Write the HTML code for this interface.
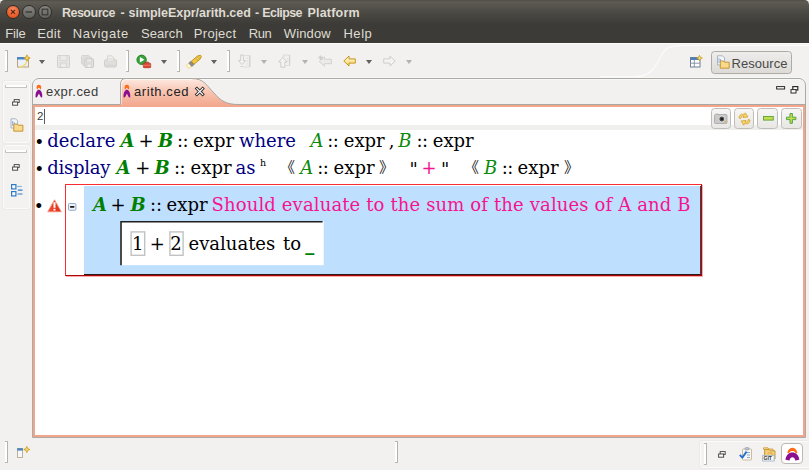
<!DOCTYPE html>
<html><head><meta charset="utf-8"><title>Resource - simpleExpr/arith.ced - Eclipse Platform</title>
<style>
html,body{margin:0;padding:0;}
body{width:809px;height:470px;overflow:hidden;background:#f2f1f0;position:relative;font-family:"Liberation Sans",sans-serif;}
.abs{position:absolute;}
#title{left:0;top:0;width:809px;height:24px;background:linear-gradient(#504e47 0,#5d5b52 2px,#4c4a44 50%,#3c3b37 100%);border-radius:4.500px 4.500px 0 0;}
#menubar{left:0;top:24px;width:809px;height:19px;background:#3c3b37;border-bottom:1px solid #fbfbfa;}
.t{position:absolute;white-space:nowrap;transform-origin:0 0;line-height:1;}
.tt{top:7px;font-weight:bold;font-size:12.5px;color:#dfdbd2;}
.m{top:26.5px;font-size:13px;color:#dfdbd2;}
/* tab folder */
#folder{left:32px;top:78px;width:772px;height:358px;border:1px solid #acaaa5;box-shadow:0 -1px 0 #f7f7f6, inset 0 1px 0 #f8f8f7;border-radius:7px 7px 0 0;background:#f2f1f0;}
#oband{left:33px;top:105px;width:772px;height:2px;background:#f2a58a;}
#oframe{left:33px;top:105px;width:768px;height:328px;border:2px solid #f2a58a;background:#fff;}
#gline{left:33px;top:104px;width:772px;height:1px;background:#a9a7a2;}
#gband{left:35px;top:125px;width:768px;height:5px;background:#efefee;}
.ln{position:absolute;white-space:nowrap;font-family:"DejaVu Serif",serif;font-size:18px;line-height:26px;height:26px;color:#000;}
.ln span{position:absolute;top:0;}
.kw{color:#000080;}
.ln span.bu{font-size:17px;top:.5px;}
.cc{letter-spacing:-.6px;}
.ex{letter-spacing:0;margin-left:.6px}
.bk{font-size:15px;font-family:"Liberation Sans","Noto Sans CJK SC","WenQuanYi Zen Hei",sans-serif;color:#222;}
.gb{color:#008000;font-weight:bold;font-style:italic;}
.gi{color:#0c8a0c;font-style:italic;}
.pk{color:#f5148e;}

.sep{position:absolute;width:2px;background:#fff;border-right:1px solid #b4b2ad;}
.sep:before,.sep:after{content:"";position:absolute;left:0;width:3px;height:1px;background:#b9b7b2;}
.sep:before{top:-1px}.sep:after{bottom:-1px}
.dd{position:absolute;width:0;height:0;border-left:3.5px solid transparent;border-right:3.5px solid transparent;border-top:4.5px solid #62615e;}
.dd.l{border-top-color:#b4b2ae;}
svg{position:absolute;overflow:visible;}
.panel{position:absolute;border:1px solid #fbfbfa;border-radius:2.500px;background:#f3f2f1;box-shadow:0 0 0 1px #eceae8;}
.hnd{position:absolute;height:2px;background:#fff;border:1px solid #c6c4c0;border-top:none;border-radius:0 0 1px 1px}

.wb{position:absolute;top:5.100px;width:12px;height:12px;border-radius:50%;border:.8px solid #2e2d2a;box-sizing:content-box;}
.tab{position:absolute;font-size:13px;color:#3a3a38;white-space:nowrap;line-height:1;}
.btn{position:absolute;box-sizing:border-box;border:1px solid #c0bdb8;border-radius:3.5px;background:linear-gradient(#f7f6f5,#e9e7e4);}
</style></head><body>
<div id="title" class="abs"></div>
<div id="menubar" class="abs"></div>

<!-- window buttons -->
<div class="wb" style="left:6.3px;background:radial-gradient(circle at 50% 30%,#f58a62,#e9541f 75%);"></div>
<div class="wb" style="left:22.3px;background:linear-gradient(#85847f,#64635f);"></div>
<div class="wb" style="left:38.4px;background:linear-gradient(#85847f,#64635f);"></div>
<svg style="left:0;top:0" width="60" height="24" viewBox="0 0 60 24">
 <path d="M11 9.900 L15 13.900 M15 9.900 L11 13.900" stroke="#5a2410" stroke-width="1.300"/>
 <path d="M25.6 12 H32" stroke="#3a3936" stroke-width="1.4"/>
 <rect x="42.2" y="9.2" width="5.6" height="5.6" fill="none" stroke="#3a3936" stroke-width="1.2"/>
</svg>
<span class="t tt" style="left:61.9px;letter-spacing:-.49px">Resource</span>
<span class="t tt" style="left:120.5px">-</span>
<span class="t tt" style="left:128.6px;letter-spacing:-.04px">simpleExpr/arith.ced</span>
<span class="t tt" style="left:254.9px">-</span>
<span class="t tt" style="left:262.3px;letter-spacing:-.59px">Eclipse</span>
<span class="t tt" style="left:307.5px;letter-spacing:.2px">Platform</span>
<span class="t m" style="left:5.2px;letter-spacing:-.14px">File</span>
<span class="t m" style="left:37.3px;letter-spacing:.3px">Edit</span>
<span class="t m" style="left:72.7px;letter-spacing:.6px">Navigate</span>
<span class="t m" style="left:140.9px;letter-spacing:.11px">Search</span>
<span class="t m" style="left:193.8px;letter-spacing:.29px">Project</span>
<span class="t m" style="left:248.7px;letter-spacing:-.41px">Run</span>
<span class="t m" style="left:283.8px;letter-spacing:.13px">Window</span>
<span class="t m" style="left:343.4px;letter-spacing:.56px">Help</span>

<!-- toolbar -->
<div class="sep" style="left:5px;top:51px;height:20px"></div>
<div class="sep" style="left:126px;top:51px;height:20px"></div>
<div class="sep" style="left:176.5px;top:51px;height:20px"></div>
<div class="sep" style="left:227px;top:51px;height:20px"></div>
<div class="dd" style="left:39px;top:60px"></div>
<div class="dd" style="left:160.5px;top:60px"></div>
<div class="dd" style="left:211px;top:60px"></div>
<div class="dd l" style="left:261px;top:60px"></div>
<div class="dd l" style="left:301.5px;top:60px"></div>
<div class="dd" style="left:365.5px;top:60px"></div>
<div class="dd l" style="left:405.5px;top:60px"></div>
<!-- new -->
<svg style="left:16px;top:54px" width="16" height="16" viewBox="0 0 16 16">
 <rect x="1.5" y="3.5" width="11" height="9.5" fill="#e9f1fb" stroke="#b9a27a"/>
 <rect x="1" y="3" width="9" height="2.5" fill="#4a86c5"/>
 <path d="M11 5 C11 10 8 12.5 3.5 13" fill="none" stroke="#f5d76b" stroke-width="1.3"/>
 <path d="M11 .8 L12 3 L14.2 4 L12 5 L11 7.2 L10 5 L7.8 4 L10 3Z" fill="#f3d06a" stroke="#c99a1c" stroke-width=".8"/>
</svg>
<!-- save (disabled) -->
<svg style="left:57px;top:55px" width="13" height="13" viewBox="0 0 13 13">
 <rect x=".5" y=".5" width="12" height="12" rx="1" fill="#e7e5e3" stroke="#d3d1ce"/>
 <rect x="3" y=".5" width="7" height="5" fill="#ebeae8" stroke="#d4d2cf" stroke-width=".7"/>
 <rect x="3.5" y="8" width="6" height="4.5" fill="#ecebe9" stroke="#cfcdca" stroke-width=".7"/>
</svg>
<!-- save all (disabled) -->
<svg style="left:80.5px;top:55px" width="13" height="13" viewBox="0 0 13 13">
 <rect x=".5" y=".5" width="8" height="8.5" rx="1" fill="#e6e5e3" stroke="#d6d4d1"/>
 <rect x="2" y="2" width="8.5" height="8.5" rx="1" fill="#e6e5e3" stroke="#d6d4d1"/>
 <rect x="3.8" y="3.8" width="8.7" height="8.7" rx="1" fill="#e3e1df" stroke="#cbc9c6"/>
 <rect x="5.5" y="4" width="5.2" height="3" fill="#ecebe9" stroke="#d0cecb" stroke-width=".7"/>
 <rect x="6" y="9" width="4.2" height="3.4" fill="#eeedeb" stroke="#cfcdca" stroke-width=".7"/>
</svg>
<!-- print (disabled) -->
<svg style="left:104px;top:55px" width="13" height="13" viewBox="0 0 13 13">
 <path d="M3.5 5.5 V.8 H8 L9.8 2.6 V5.5Z" fill="#efeeec" stroke="#d3d1ce" stroke-width=".8"/>
 <rect x=".5" y="4.8" width="12" height="7.2" rx="1.5" fill="#e1dfdd" stroke="#d0cecb"/>
 <rect x="3" y="4" width="7" height="2.6" fill="#eae9e7" stroke="#d3d1ce" stroke-width=".6"/>
 <rect x="1.2" y="9.6" width="10.6" height="2" fill="#d9d7d4"/>
</svg>
<!-- run ext tools -->
<svg style="left:136px;top:54px" width="16" height="15" viewBox="0 0 16 15">
 <circle cx="5.600" cy="5.800" r="4.700" fill="#3aa23a" stroke="#1f7a22" stroke-width=".9"/>
 <path d="M3.900 3 L8.400 5.800 L3.900 8.600Z" fill="#fff"/>
 <path d="M9.200 9.200 V8.300 H12.600 V9.200" fill="none" stroke="#b5301f" stroke-width="1"/>
 <rect x="7.300" y="9.200" width="7.400" height="4.500" rx=".8" fill="#d9432f" stroke="#b5301f" stroke-width=".7"/>
 <rect x="7.300" y="10.800" width="7.400" height=".8" fill="#f08a7a"/>
</svg>
<!-- flashlight / search -->
<svg style="left:186px;top:54px" width="16" height="15" viewBox="0 0 16 15">
 <g transform="rotate(-40 8 7.500)">
  <rect x="-.5" y="5.500" width="4" height="4.200" rx="1.200" fill="#fffbe0" stroke="#f3cf5e" stroke-width=".8"/>
  <rect x="3" y="5.200" width="3.200" height="4.800" rx=".8" fill="#8d8d8d" stroke="#777" stroke-width=".6"/>
  <path d="M6.200 5.600 H14.500 L17 7 V8.200 L14.500 9.600 H6.200Z" fill="#f5c842" stroke="#b98a14" stroke-width=".8"/>
  <rect x="11.400" y="6.900" width="3" height="1.400" rx=".5" fill="#fff3b0" stroke="#a77b10" stroke-width=".5"/>
 </g>
</svg>
<!-- next annotation (disabled) -->
<svg style="left:238px;top:54px" width="13" height="14" viewBox="0 0 13 14">
 <path d="M6.500 1.500 H11.800 V13 H6" fill="#f1f0ee" stroke="#dad8d5" stroke-width=".8"/>
 <path d="M11.800 1.500 V13" stroke="#cfcdca" stroke-width=".9"/>
 <path d="M2.600 1 H5.400 V6.500 H7.400 L4 10.600 L.6 6.500 H2.600Z" fill="#f4f3f1" stroke="#c9c7c4" stroke-width=".8"/>
 <path d="M2 12.500 H6 M8.500 4 H10.500 M8.500 7 H10.500 M8.500 10 H10.500" stroke="#d6d4d1" stroke-width=".8"/>
</svg>
<!-- prev annotation (disabled) -->
<svg style="left:278px;top:54px" width="13" height="14" viewBox="0 0 13 14">
 <path d="M5 1 H11.600 V11.500 H8" fill="#f1f0ee" stroke="#dad8d5" stroke-width=".8"/>
 <path d="M11.600 1 V11.500" stroke="#cfcdca" stroke-width=".9"/>
 <path d="M2.800 13.200 H6.800 V8 H9 L4.800 3.400 L.6 8 H2.800Z" fill="#f5f4f2" stroke="#c6c4c1" stroke-width=".8"/>
 <path d="M4.500 2.200 H7 M9 4.500 H10.500 M9 7 H10.500" stroke="#d6d4d1" stroke-width=".8"/>
</svg>
<!-- last edit (disabled) -->
<svg style="left:318px;top:55px" width="15" height="12" viewBox="0 0 15 12">
 <path d="M1.2 6.5 L6.4 1.8 V4.3 H13.4 V8.7 H6.4 V11.2Z" fill="#ecebe9" stroke="#d0cecb" stroke-width=".9"/>
 <path d="M2.6 .4 V5 M.3 2.7 H4.9 M1 1.1 L4.2 4.3 M4.2 1.1 L1 4.3" stroke="#c6c4c1" stroke-width=".7"/>
</svg>
<!-- back -->
<svg style="left:342.5px;top:55px" width="13" height="12" viewBox="0 0 13 12">
 <defs><linearGradient id="gy" x1="0" y1="0" x2="0" y2="1"><stop offset="0" stop-color="#fffbe6"/><stop offset=".5" stop-color="#fde9a0"/><stop offset="1" stop-color="#f6cd5c"/></linearGradient></defs>
 <path d="M.8 6 L6 1 V3.9 H12.3 V8.1 H6 V11Z" fill="url(#gy)" stroke="#c8951e" stroke-width="1" stroke-linejoin="round"/>
</svg>
<!-- forward (disabled) -->
<svg style="left:383px;top:55px" width="13" height="12" viewBox="0 0 13 12">
 <path d="M12.2 6 L7 1 V3.9 H.7 V8.1 H7 V11Z" fill="#f4f3f2" stroke="#d0cecb" stroke-width="1" stroke-linejoin="round"/>
</svg>

<div id="folder" class="abs"></div>
<div id="oframe" class="abs"></div>
<div id="gline" class="abs"></div>
<div id="gband" class="abs"></div>


<!-- perspective switcher -->
<svg style="left:600px;top:44px" width="209" height="36" viewBox="0 0 209 36">
 <path d="M0 32.500 H34 C50 32.500 54 25 60 14 C65 4.500 68 1.700 80 1.700 H209" fill="none" stroke="#fbfbfa" stroke-width="1.200"/>
</svg>
<svg style="left:690px;top:55px" width="13" height="13" viewBox="0 0 13 13">
 <rect x=".5" y="2.5" width="9.5" height="9.5" fill="#fff" stroke="#6d7f96" stroke-width="1"/>
 <rect x=".5" y="2.5" width="9.5" height="2.5" fill="#4f7fb8"/>
 <path d="M.5 8.2 H10 M4.3 5 V12" stroke="#7d8da3" stroke-width=".9"/>
 <path d="M9.5 .2 L10.4 2.2 L12.4 3 L10.4 3.9 L9.5 5.9 L8.6 3.9 L6.6 3 L8.6 2.2Z" fill="#f6d873" stroke="#c9981a" stroke-width=".7"/>
</svg>
<div class="btn" style="left:710.5px;top:50.5px;width:81px;height:23px;border-color:#aeaba5;background:linear-gradient(#eeedeb,#dddbd8);"></div>
<svg style="left:716px;top:55px" width="14" height="14" viewBox="0 0 14 14">
 <path d="M1.5 .8 H6.5 L8.5 2.8 V10 H1.5Z" fill="#f3f5f9" stroke="#9aa6b8" stroke-width=".8"/>
 <path d="M3 3 V8 M4.5 4 V7" stroke="#7da0d0" stroke-width=".8"/>
 <path d="M4.3 13.2 V6 H7.5 L8.6 7.2 H13.2 V13.2Z" fill="#f9d98a" stroke="#c28f2c" stroke-width=".9" stroke-linejoin="round"/>
</svg>
<span class="t" style="left:731.6px;top:56.5px;font-size:13px;color:#4a4a48;letter-spacing:.04px">Resource</span>

<!-- tab folder controls -->
<svg style="left:776px;top:85.5px" width="24" height="9" viewBox="0 0 24 9">
 <rect x=".6" y=".6" width="8" height="2.4" fill="#fff" stroke="#2b2b2b" stroke-width="1"/>
 <rect x="16.8" y=".6" width="5" height="3.4" fill="#fff" stroke="#2b2b2b" stroke-width="1.2"/>
 <rect x="15" y="3.6" width="5" height="3.4" fill="#fff" stroke="#2b2b2b" stroke-width="1"/>
</svg>

<!-- left trim panels -->
<div class="panel" style="left:3px;top:80.500px;width:25px;height:60px"></div>
<div class="hnd" style="left:5px;top:85px;width:20px"></div>
<div class="panel" style="left:3px;top:145px;width:25px;height:61.500px"></div>
<div class="hnd" style="left:5px;top:150px;width:20px"></div>
<svg style="left:12px;top:99px" width="8" height="7" viewBox="0 0 8 7">
 <rect x="2.2" y=".6" width="5" height="2.8" fill="#fff" stroke="#4a4a4a" stroke-width="1"/>
 <rect x=".6" y="3" width="5" height="3.2" fill="#fff" stroke="#4a4a4a" stroke-width="1"/>
</svg>
<svg style="left:12px;top:164px" width="8" height="7" viewBox="0 0 8 7">
 <rect x="2.2" y=".6" width="5" height="2.8" fill="#fff" stroke="#4a4a4a" stroke-width="1"/>
 <rect x=".6" y="3" width="5" height="3.2" fill="#fff" stroke="#4a4a4a" stroke-width="1"/>
</svg>
<svg style="left:10px;top:118px" width="14" height="14" viewBox="0 0 14 14">
 <path d="M1 .8 H5.6 L7.6 2.8 V10 H1Z" fill="#f3f5f9" stroke="#9aa6b8" stroke-width=".8"/>
 <path d="M2.6 3 V8 M4.1 4 V7" stroke="#7da0d0" stroke-width=".8"/>
 <path d="M3.8 13.2 V6 H7 L8.1 7.2 H12.9 V13.2Z" fill="#f9d98a" stroke="#c28f2c" stroke-width=".9" stroke-linejoin="round"/>
</svg>
<svg style="left:10.5px;top:184px" width="12" height="13" viewBox="0 0 12 13">
 <rect x=".6" y=".6" width="4.3" height="4.3" fill="#fff" stroke="#2f7ac6" stroke-width="1.2"/>
 <rect x=".6" y="7.6" width="4.3" height="4.3" fill="#fff" stroke="#2f7ac6" stroke-width="1.2"/>
 <path d="M6.5 2.5 H10.5 M6.8 6.2 H11.5 M6.5 10 H11.5" stroke="#2f7ac6" stroke-width="1.2"/>
 <path d="M6.5 2.5 H10.5" stroke="#8ab6e4" stroke-width="1.2"/>
</svg>

<!-- tabs -->
<svg style="left:100px;top:78px" width="150" height="29" viewBox="0 0 150 29">
 <defs><linearGradient id="gt" x1="0" y1="0" x2="0" y2="1"><stop offset="0" stop-color="#fdeae2"/><stop offset=".45" stop-color="#f8c5b2"/><stop offset="1" stop-color="#f2a58a"/></linearGradient></defs>
 <path d="M20.500 27 V6 Q20.500 .5 26 .5 H92 C104 .5 107 8 114 15 C121 23 126 26.500 139 26.500 V29 H20.500Z" fill="url(#gt)"/>
 <path d="M20.500 26.500 V6 Q20.500 .5 26 .5 H92 C104 .5 107 8 114 15 C121 23 126 26.500 139 26.500" fill="none" stroke="#a9a7a2" stroke-width="1"/>
 <path d="M21.500 26.500 V6.500 Q21.500 1.500 26 1.500 H92" fill="none" stroke="#fff" stroke-opacity=".55" stroke-width="1"/>
</svg>
<svg style="left:35px;top:84px" width="8" height="15" viewBox="0 0 8 15" id="ced1">
 <path d="M3.900 .8 C5.600 .8 6.200 2.200 6.200 3.500 C6.200 4.400 6 5.100 5.700 5.400 L3.900 3.600 L2.100 5.400 C1.800 5.100 1.600 4.400 1.600 3.500 C1.600 2.200 2.200 .8 3.900 .8Z" fill="#ff6a13"/>
 <path d="M3.900 5.400 C6.400 6.200 7.600 9 7.200 13.600 C6.400 13.600 5.700 13.200 5.400 12.600 L3.900 9.600 L2.400 12.600 C2.100 13.200 1.400 13.600 .6 13.600 C.2 9 1.400 6.200 3.900 5.400Z" fill="#8a0f8f"/>
</svg>
<svg style="left:123px;top:84px" width="8" height="15" viewBox="0 0 8 15">
 <path d="M3.900 .8 C5.600 .8 6.200 2.200 6.200 3.500 C6.200 4.400 6 5.100 5.700 5.400 L3.900 3.600 L2.100 5.400 C1.800 5.100 1.600 4.400 1.600 3.500 C1.600 2.200 2.200 .8 3.900 .8Z" fill="#ff6a13"/>
 <path d="M3.900 5.400 C6.400 6.200 7.600 9 7.200 13.600 C6.400 13.600 5.700 13.200 5.400 12.600 L3.900 9.600 L2.400 12.600 C2.100 13.200 1.400 13.600 .6 13.600 C.2 9 1.400 6.200 3.900 5.400Z" fill="#8a0f8f"/>
</svg>
<span class="tab" style="left:46px;top:85px;letter-spacing:.44px" id="tab1">expr.ced</span>
<span class="tab" style="left:134px;top:85px;color:#222;letter-spacing:.57px" id="tab2">arith.ced</span>
<svg style="left:195px;top:87.300px" width="9.500" height="9" viewBox="0 0 10 10">
 <path d="M1.800 1.800 L8.200 8.200 M8.200 1.800 L1.800 8.200" stroke="#2b2b2b" stroke-width="3.400" stroke-linecap="square"/>
 <path d="M1.800 1.800 L8.200 8.200 M8.200 1.800 L1.800 8.200" stroke="#fff" stroke-width="1.500" stroke-linecap="square"/>
</svg>

<!-- editor top row -->
<span class="t" style="left:37px;top:111px;font-size:11.500px;color:#3a3a3a">2</span>
<div class="abs" style="left:43.600px;top:108.500px;width:1.200px;height:15px;background:#5a5a5a"></div>
<div class="btn" style="left:710.600px;top:108.200px;width:20.800px;height:20.600px"></div>
<div class="btn" style="left:733.500px;top:108.200px;width:20.800px;height:20.600px"></div>
<div class="btn" style="left:757.300px;top:108.200px;width:20.800px;height:20.600px"></div>
<div class="btn" style="left:780.800px;top:108.200px;width:20.800px;height:20.600px"></div>
<svg style="left:714px;top:113px" width="14" height="11" viewBox="0 0 14 11">
 <rect x=".5" y="1.500" width="12.500" height="9" rx="1" fill="#c9c9c9" stroke="#a4a4a4" stroke-width=".8"/>
 <rect x="1.500" y=".6" width="3" height="1.400" fill="#b5b5b5"/>
 <circle cx="7.800" cy="6" r="3" fill="#555" stroke="#e6e6e6" stroke-width=".9"/>
 <circle cx="7.800" cy="6" r="1.300" fill="#1c1c1c"/>
 <rect x="10.800" y="8" width="1.500" height="1.200" fill="#e8a33a"/>
</svg>
<svg style="left:738px;top:112px" width="13" height="14" viewBox="0 0 13 14">
 <path d="M1 6 C1 2.500 4 1.500 6.500 2.500 L7.300 .8 L10 5 L5 5.600 L5.800 4 C4.300 3.500 3 4.200 2.800 6.500Z" fill="#f6d46a" stroke="#d19a22" stroke-width=".7" stroke-linejoin="round"/>
 <path d="M12 8 C12 11.500 9 12.500 6.500 11.500 L5.700 13.200 L3 9 L8 8.400 L7.200 10 C8.700 10.500 10 9.800 10.200 7.500Z" fill="#f6d46a" stroke="#d19a22" stroke-width=".7" stroke-linejoin="round"/>
</svg>
<svg style="left:762.600px;top:115.600px" width="10.800" height="4.600" viewBox="0 0 10.800 4.600">
 <rect x=".5" y=".5" width="9.800" height="3.600" fill="#c4dd4e" stroke="#58a23c" stroke-width=".9"/>
</svg>
<svg style="left:786px;top:113.200px" width="10.400" height="10.800" viewBox="0 0 10.400 10.800">
 <path d="M4 .5 H6.400 V4.200 H9.900 V6.600 H6.400 V10.300 H4 V6.600 H.5 V4.200 H4Z" fill="#c4dd4e" stroke="#46a03c" stroke-width=".9"/>
</svg>

<!-- status bar -->
<div class="sep" style="left:5px;top:442px;height:20px"></div>
<div class="sep" style="left:395px;top:442px;height:20px"></div>
<svg style="left:17px;top:446px" width="14" height="12" viewBox="0 0 14 12">
 <rect x=".5" y="2.500" width="5" height="9" fill="#f4f8fd" stroke="#b8a98a" stroke-width=".9"/>
 <rect x=".3" y="2.200" width="5.400" height="2.400" fill="#4a86c5"/>
 <path d="M9.800 .4 L10.700 2.600 L12.900 3.500 L10.700 4.400 L9.800 6.600 L8.900 4.400 L6.700 3.500 L8.900 2.600Z" fill="#f6d873" stroke="#c9981a" stroke-width=".8"/>
</svg>
<div class="panel" style="left:700px;top:441px;width:112px;height:24.500px;border-radius:2.500px"></div>
<div class="sep" style="left:704px;top:444px;height:20px"></div>
<svg style="left:718px;top:450.500px" width="8" height="7" viewBox="0 0 8 7">
 <rect x="2.200" y=".6" width="5" height="2.800" fill="#fff" stroke="#4a4a4a" stroke-width="1"/>
 <rect x=".6" y="3" width="5" height="3.200" fill="#fff" stroke="#4a4a4a" stroke-width="1"/>
</svg>
<svg style="left:739px;top:446.500px" width="14" height="14" viewBox="0 0 14 14">
 <rect x="3.500" y="2" width="9" height="11" rx=".8" fill="#f6f7f9" stroke="#c9b48c" stroke-width=".9"/>
 <rect x="6" y=".6" width="4" height="2.400" rx=".8" fill="#b8c4d4" stroke="#8d9bb0" stroke-width=".6"/>
 <path d="M8 5.500 H11 M8 8 H11 M8 10.500 H11" stroke="#7b9ccc" stroke-width=".9"/>
 <path d="M.8 7.800 L3.300 10.600 L7.600 4.600" fill="none" stroke="#2a6fd0" stroke-width="1.900" stroke-linejoin="round"/>
</svg>
<svg style="left:762px;top:446.500px" width="14" height="15" viewBox="0 0 14 15">
 <path d="M1.500 2.500 V.8 H6 L7 2 H11 V3.500" fill="#f7d98e" stroke="#c9972e" stroke-width=".8"/>
 <path d="M2.600 12 V2.500 H7 L8 3.800 H13 V12Z" fill="#f5cf77" stroke="#c28f2c" stroke-width=".9" stroke-linejoin="round"/>
 <path d="M5.500 6 H10 V8" fill="none" stroke="#d9a63b" stroke-width=".9"/>
 <rect x=".6" y="8.600" width="11.600" height="5.400" fill="#f7f7f7" stroke="#9bb0cc" stroke-width=".8"/>
 <text x="1.500" y="13.200" font-family="Liberation Sans, sans-serif" font-size="5" font-weight="bold" fill="#333">GIT</text>
</svg>
<div class="btn" style="left:781.300px;top:442.800px;width:21.500px;height:21.600px;background:#fff;border-color:#bcb9b4;border-radius:4px"></div>
<svg style="left:785px;top:446.500px" width="15" height="15" viewBox="0 0 15 15">
 <path d="M2.300 5.900 C3.200 2.400 5.300 .8 7.400 .8 C9.500 .8 11.600 2.400 12.500 5.900 L10.900 6.200 C10 4.700 8.800 4.100 7.400 4.100 C6 4.100 4.800 4.700 3.900 6.200Z" fill="#ff6a13"/>
 <path d="M.5 12.800 C.9 8.200 3.800 5.600 7.400 5.600 C11 5.600 13.900 8.200 14.300 12.800 L10.300 13.500 C9.800 11.200 8.900 10.200 7.400 10.200 C5.900 10.200 5 11.200 4.500 13.500Z" fill="#8a0f8f"/>
</svg>

<!-- editor text -->
<div class="ln" style="left:0;top:128px;width:809px">
<span class="bu" style="left:34.300px">•</span><span class="kw" style="left:47.3px">declare</span><span class="gb" style="left:120.5px">A</span><span style="left:138.6px">+</span><span class="gb" style="left:158px">B</span><span class="cc" style="left:177px">::</span><span class="ex" style="left:192.5px">expr</span><span class="kw" style="left:239px">where</span><span class="gi" style="left:310.5px">A</span><span class="cc" style="left:327.3px">::</span><span class="ex" style="left:343.2px">expr</span><span style="left:388.800px">,</span><span class="gi" style="left:398.3px">B</span><span class="cc" style="left:416.5px">::</span><span class="ex" style="left:432.2px">expr</span>
</div>
<div class="ln" style="left:0;top:155px;width:809px">
<span class="bu" style="left:34.300px">•</span><span class="kw" style="left:47.3px;letter-spacing:-.25px">display</span><span class="gb" style="left:116.5px">A</span><span style="left:135.2px">+</span><span class="gb" style="left:154.5px">B</span><span class="cc" style="left:174px">::</span><span class="ex" style="left:190px">expr</span><span class="kw" style="left:235.5px">as</span><span style="left:260px;font-size:9.500px;top:-5.500px">h</span><span class="bk" style="left:280px">《</span><span class="gi" style="left:300.3px">A</span><span class="cc" style="left:317.3px">::</span><span class="ex" style="left:333px">expr</span><span class="bk" style="left:379px">》</span><span style="left:409.600px;top:1.500px">"</span><span class="pk" style="left:421.5px">+</span><span style="left:441px;top:1.500px">"</span><span class="bk" style="left:464px">《</span><span class="gi" style="left:484px">B</span><span class="cc" style="left:501.8px">::</span><span class="ex" style="left:517px">expr</span><span class="bk" style="left:564px">》</span>
</div>

<!-- test box -->
<div class="abs" style="left:65px;top:184px;width:635px;height:90px;border:1px solid #fa2c30;border-right-color:#a80808;border-bottom-color:#a80808;background:#fff;box-shadow:1px 1px 0 rgba(255,40,40,.4);"></div>
<div class="abs" style="left:84px;top:186px;width:616px;height:88px;background:#bfdfff;border-right:1px solid #3a444f;border-bottom:1px solid #2b1818;"></div>
<svg style="left:118px;top:219px" width="210" height="50" viewBox="118 219 210 50">
 <rect x="120.200" y="221" width="203.500" height="44.200" fill="#fff"/>
 <path d="M121 265.200 V221.800 H322.600" fill="none" stroke="#1e1e1e" stroke-width="1.600"/>
 <rect x="131.100" y="231.900" width="13.600" height="23.400" fill="none" stroke="#c2c2c2" stroke-width="1.400"/>
 <rect x="169.900" y="231.900" width="13.200" height="23.400" fill="none" stroke="#c2c2c2" stroke-width="1.400"/>
</svg>
<div class="ln" style="left:0;top:192px;width:809px">
<span class="bu" style="left:33.800px">•</span><span class="gb" style="left:93px">A</span><span style="left:110.6px">+</span><span class="gb" style="left:130.5px">B</span><span class="cc" style="left:150px;letter-spacing:-.1px">::</span><span class="ex" style="left:166px">expr</span><span class="pk" style="left:211.500px;letter-spacing:.135px" id="pink">Should evaluate to the sum of the values of A and B</span>
</div>
<div class="ln" style="left:0;top:231px;width:809px">
<span style="left:132.100px">1</span><span style="left:149.700px">+</span><span style="left:170.300px">2</span><span style="left:188.500px">evaluates</span><span style="left:283px">to</span><span style="left:305.200px;top:.5px;color:#008000;font-weight:bold;">_</span>
</div>
<!-- warning + collapse -->
<svg style="left:46.500px;top:198.800px" width="15" height="13.500" viewBox="0 0 15 13.500">
 <defs><linearGradient id="gw" x1="0" y1="0" x2="1" y2="0"><stop offset="0" stop-color="#f0553a"/><stop offset=".5" stop-color="#e93a22"/><stop offset="1" stop-color="#e0301c"/></linearGradient></defs>
 <path d="M7.500 .8 L14.300 12.800 H.7Z" fill="url(#gw)" stroke="#f4937f" stroke-width=".8" stroke-linejoin="round"/>
 <path d="M7.500 3.200 V8.800" stroke="#fff" stroke-width="2"/>
 <rect x="6.500" y="9.800" width="2" height="1.800" fill="#fff"/>
</svg>
<svg style="left:67.800px;top:202.600px" width="8.400" height="7.800" viewBox="0 0 8.400 7.800">
 <rect x=".5" y=".5" width="7.400" height="6.800" rx="1" fill="#eef2f7" stroke="#8faac8"/>
 <path d="M2.100 3.900 H6.300" stroke="#111" stroke-width="1.700"/>
</svg>
</body></html>
